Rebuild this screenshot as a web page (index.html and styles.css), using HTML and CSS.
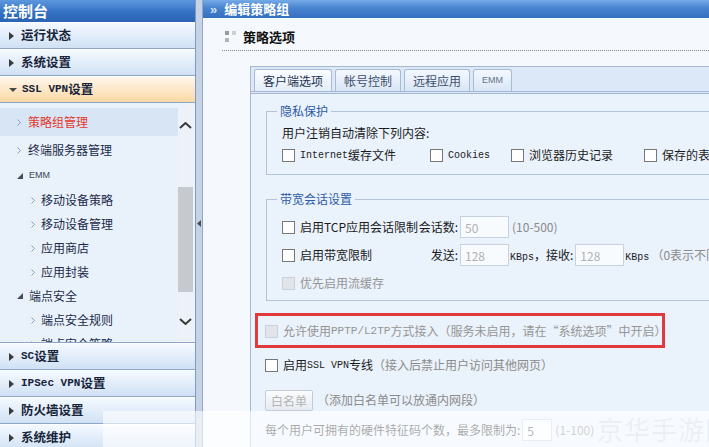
FILE: index.html
```html
<!DOCTYPE html>
<html lang="zh-CN">
<head>
    <meta charset="UTF-8">
    <title>控制台 - 编辑策略组</title>
    <link rel="stylesheet" href="styles.css">
</head>
<body>

<div class="app">

    <!-- 左侧导航 -->
    <aside class="sidebar">
        <div class="side-title">控制台</div>
        <div class="acc-head"><i class="tri-right"></i>运行状态</div>
        <div class="acc-head"><i class="tri-right"></i>系统设置</div>
        <div class="acc-head open"><i class="tri-down"></i><span class="en-b">SSL VPN</span>设置</div>

        <div class="acc-body">
            <ul class="tree">
                <li class="lv1 current"><svg class="chev" width="4" height="7" viewBox="0 0 4 7"><path d="M0.5 0.5L3.5 3.5L0.5 6.5" /></svg>策略组管理</li>
                <li class="lv1"><svg class="chev" width="4" height="7" viewBox="0 0 4 7"><path d="M0.5 0.5L3.5 3.5L0.5 6.5" /></svg>终端服务器管理</li>
                <li class="grp"><svg class="grp-tri" width="6" height="6" viewBox="0 0 6 6"><path d="M6 0V6H0Z" /></svg><span class="emm">EMM</span></li>
                <li class="lv2"><svg class="chev" width="4" height="7" viewBox="0 0 4 7"><path d="M0.5 0.5L3.5 3.5L0.5 6.5" /></svg>移动设备策略</li>
                <li class="lv2"><svg class="chev" width="4" height="7" viewBox="0 0 4 7"><path d="M0.5 0.5L3.5 3.5L0.5 6.5" /></svg>移动设备管理</li>
                <li class="lv2"><svg class="chev" width="4" height="7" viewBox="0 0 4 7"><path d="M0.5 0.5L3.5 3.5L0.5 6.5" /></svg>应用商店</li>
                <li class="lv2"><svg class="chev" width="4" height="7" viewBox="0 0 4 7"><path d="M0.5 0.5L3.5 3.5L0.5 6.5" /></svg>应用封装</li>
                <li class="grp"><svg class="grp-tri" width="6" height="6" viewBox="0 0 6 6"><path d="M6 0V6H0Z" /></svg>端点安全</li>
                <li class="lv2"><svg class="chev" width="4" height="7" viewBox="0 0 4 7"><path d="M0.5 0.5L3.5 3.5L0.5 6.5" /></svg>端点安全规则</li>
                <li class="lv2"><svg class="chev" width="4" height="7" viewBox="0 0 4 7"><path d="M0.5 0.5L3.5 3.5L0.5 6.5" /></svg>端点安全策略</li>
            </ul>
            <!-- 滚动条 -->
            <div class="vscroll">
                <div class="sb-btn up"><svg width="13" height="7" viewBox="0 0 13 7"><path d="M1 6L6.5 1L12 6" /></svg></div>
                <div class="sb-track"><div class="sb-thumb"></div></div>
                <div class="sb-btn down"><svg width="13" height="7" viewBox="0 0 13 7"><path d="M1 1L6.5 6L12 1" /></svg></div>
            </div>
        </div>

        <div class="acc-head"><i class="tri-right"></i><span class="en-b">SC</span>设置</div>
        <div class="acc-head"><i class="tri-right"></i><span class="en-b">IPSec VPN</span>设置</div>
        <div class="acc-head"><i class="tri-right"></i>防火墙设置</div>
        <div class="acc-head"><i class="tri-right"></i>系统维护</div>
    </aside>

    <div class="splitter">
        <svg width="4" height="7" viewBox="0 0 4 7"><path d="M4 0V7L0 3.5Z" /></svg>
    </div>

    <!-- 主内容 -->
    <main class="main">
        <div class="main-head"><span class="raquo">&raquo;</span>编辑策略组</div>

        <div class="section-title">
            <svg width="12" height="12" viewBox="0 0 12 12">
                <rect x="0" y="0" width="4" height="4" fill="#9a9a9a" />
                <rect x="7" y="0" width="4" height="4" fill="#cfcfcf" />
                <rect x="0" y="7" width="4" height="4" fill="#b3b3b3" />
            </svg>
            策略选项
        </div>

        <div class="tabs">
            <div class="tab-bar">
                <span class="tab active">客户端选项</span>
                <span class="tab">帐号控制</span>
                <span class="tab">远程应用</span>
                <span class="tab tab-en">EMM</span>
            </div>

            <div class="tab-panel">
                <fieldset class="group">
                    <legend>隐私保护</legend>
                    <div class="line">用户注销自动清除下列内容:</div>
                    <div class="clear-list">
                        <label><input type="checkbox"><span class="en">Internet</span>缓存文件</label>
                        <label><input type="checkbox"><span class="en">Cookies</span></label>
                        <label><input type="checkbox">浏览器历史记录</label>
                        <label><input type="checkbox">保存的表单密码</label>
                    </div>
                </fieldset>

                <fieldset class="group bandwidth">
                    <legend>带宽会话设置</legend>
                    <div class="bw-row">
                        <label class="bw-left"><input type="checkbox">启用TCP应用会话限制</label>
                        <span class="bw-key">会话数:</span>
                        <input class="num" type="text" value="50" readonly>
                        <span class="hint">(10-500)</span>
                    </div>
                    <div class="bw-row">
                        <label class="bw-left"><input type="checkbox">启用带宽限制</label>
                        <span class="bw-key">发送:</span>
                        <input class="num" type="text" value="128" readonly>
                        <span class="unit"><span class="en">KBps</span>，接收:</span>
                        <input class="num" type="text" value="128" readonly>
                        <span class="unit"><span class="en">KBps</span></span>
                        <span class="hint">（0表示不限制）</span>
                    </div>
                    <div class="bw-row">
                        <label class="off"><input type="checkbox" disabled>优先启用流缓存</label>
                    </div>
                </fieldset>

                <div class="mark">
                    <label class="off"><input type="checkbox" disabled>允许使用<span class="en wide">PPTP/L2TP</span>方式接入（服务未启用，请在“系统选项”中开启）</label>
                </div>

                <div class="row ssl">
                    <label><input type="checkbox">启用<span class="en">SSL VPN</span>专线</label>
                    <span class="hint">（接入后禁止用户访问其他网页）</span>
                </div>

                <div class="row white">
                    <button class="btn" disabled>白名单</button>
                    <span class="hint">（添加白名单可以放通内网段）</span>
                </div>

                <div class="row limit">
                    <span>每个用户可拥有的硬件特征码个数，最多限制为:</span>
                    <input class="num small" type="text" value="5" readonly>
                    <span class="hint">(1-100)</span>
                </div>
            </div>
        </div>
    </main>
</div>

<!-- 页脚水印 -->
<div class="watermark"><span>京华手游网</span></div>

</body>
</html>
```

FILE: styles.css
```css
* {
    box-sizing: border-box;
}

html, body {
    margin: 0;
    padding: 0;
}

body {
    font: 12px/1.5 "Noto Sans CJK SC", "Liberation Sans", sans-serif;
    color: #1b1b1b;
    background: #f5f9fd;
    overflow: hidden;
    position: relative;
    height: 447px;
}

.app {
    display: flex;
    height: 447px;
}

/* ===== 左侧导航 ===== */
.sidebar {
    width: 196px;
    flex: none;
    display: flex;
    flex-direction: column;
    background: #e8f0fa;
    border-right: 1px solid #7e9bbf;
    overflow: hidden;
}

.side-title {
    height: 22px;
    flex: none;
    padding-left: 3px;
    line-height: 22px;
    font-size: 15px;
    font-weight: bold;
    color: #fff;
    background: linear-gradient(#5c98de, #3571c3 55%, #2b64b4);
}

.acc-head {
    height: 27px;
    flex: none;
    display: flex;
    align-items: center;
    padding-left: 9px;
    font-size: 12.5px;
    font-weight: bold;
    color: #17243a;
    white-space: nowrap;
    background: linear-gradient(#f4f9ff, #d0e1f4);
    border-top: 1px solid #fff;
    border-bottom: 1px solid #8ca7c8;
}

.acc-head.open {
    background: linear-gradient(#fff7ec, #fbd8a4);
}

.en-b {
    font-family: "Liberation Mono", monospace;
    font-size: 11px;
    font-weight: bold;
}

.tri-right {
    width: 0;
    height: 0;
    margin-right: 7px;
    border-left: 5px solid #3b3b3b;
    border-top: 4px solid transparent;
    border-bottom: 4px solid transparent;
}

.tri-down {
    width: 0;
    height: 0;
    margin-right: 5px;
    border-top: 4px solid #4a4a4a;
    border-left: 4px solid transparent;
    border-right: 4px solid transparent;
}

.acc-body {
    height: 240px;
    flex: none;
    display: flex;
    overflow: hidden;
    background: #e9f1fb;
    border-bottom: 1px solid #8ca7c8;
}

.tree {
    flex: 1;
    list-style: none;
    margin: 0;
    padding: 5px 0 0;
    overflow: hidden;
}

.tree li {
    display: flex;
    align-items: center;
    white-space: nowrap;
    color: #1b2a48;
}

.tree .chev {
    fill: none;
    stroke: #8f9db1;
    margin-right: 7px;
}

.lv1 {
    height: 28px;
    padding-left: 17px;
}

.lv1.current {
    background: #d8e5f5;
    color: #e4372b;
}

.grp {
    height: 24px;
    padding-left: 17px;
}

.grp-tri {
    fill: #454b55;
    margin-right: 6px;
}

.emm {
    font-family: "Liberation Sans", sans-serif;
    font-size: 9px;
    color: #3c4452;
}

.lv2 {
    height: 24px;
    padding-left: 31px;
}

.lv2 .chev {
    margin-right: 6px;
}

/* 滚动条 */
.vscroll {
    width: 17px;
    flex: none;
    display: flex;
    flex-direction: column;
    background: #edf2f8;
}

.sb-btn {
    display: flex;
    align-items: center;
    justify-content: center;
    padding-right: 2px;
}

.sb-btn svg {
    fill: none;
    stroke: #3a3a3a;
    stroke-width: 2;
}

.sb-btn.up {
    height: 44px;
}

.sb-btn.down {
    height: 42px;
}

.sb-track {
    flex: 1;
    padding-top: 40px;
}

.sb-thumb {
    width: 15px;
    height: 105px;
    background: #c6c9cd;
}

/* 分隔条 */
.splitter {
    width: 7px;
    flex: none;
    display: flex;
    align-items: center;
    justify-content: center;
    background: #c5d3e4;
    border-right: 1px solid #8fa8c6;
}

.splitter svg {
    fill: #4d4d4d;
}

/* ===== 主内容 ===== */
.main {
    flex: 1;
    min-width: 0;
    overflow: hidden;
    background: #f5f9fd;
}

.main-head {
    height: 18px;
    padding-left: 7px;
    line-height: 18px;
    font-size: 13px;
    font-weight: bold;
    color: #fff;
    white-space: nowrap;
    background: linear-gradient(#74aae6, #4783cf 45%, #3470c0);
}

.raquo {
    font-family: "Liberation Sans", sans-serif;
    font-size: 13px;
    color: #d3e3f7;
    margin-right: 7px;
}

.section-title {
    display: flex;
    align-items: center;
    height: 23px;
    margin: 10px 0 0 19px;
    padding: 0 0 4px 3px;
    font-size: 13px;
    font-weight: bold;
    color: #111;
    border-bottom: 1px dotted #8a8a8a;
}

.section-title svg {
    margin-right: 6px;
}

/* 标签页 */
.tabs {
    width: 560px;
    margin: 15px 0 0 47px;
    border-left: 1px solid #a7b9d1;
    background: #eaf2fb;
}

.tab-bar {
    display: flex;
    gap: 3px;
    padding: 2px 0 0 3px;
    background: #dce8f7;
    border-top: 1px solid #a7b9d1;
    border-bottom: 3px double #a3b7d1;
}

.tab {
    height: 22px;
    padding: 0 8px;
    line-height: 21px;
    color: #3e4f6d;
    white-space: nowrap;
    background: linear-gradient(#f3f8fe, #d9e6f6);
    border: 1px solid #a8bbd3;
    border-bottom: none;
    border-radius: 3px 3px 0 0;
}

.tab.active {
    color: #22324d;
    background: linear-gradient(#fbfdff, #e3edf9);
}

.tab-en {
    font-family: "Liberation Sans", sans-serif;
    font-size: 9px;
    color: #66738a;
}

.tab-panel {
    padding: 9px 0 40px 14px;
    white-space: nowrap;
}

input[type="checkbox"] {
    appearance: none;
    width: 13px;
    height: 13px;
    margin: 0 5px 0 0;
    flex: none;
    background: #fff;
    border: 1px solid #777;
}

input[type="checkbox"]:disabled {
    background: #e1e5ea;
    border-color: #ccd2d9;
}

label {
    display: inline-flex;
    align-items: center;
}

label.off {
    color: #959595;
}

.en {
    font-family: "Liberation Mono", monospace;
    font-size: 10px;
}

.en.wide {
    font-size: 11px;
}

.hint {
    color: #8b8b8b;
}

/* 分组框 */
fieldset.group {
    margin: 0 0 0 1px;
    padding: 0 0 10px 15px;
    border: 1px solid #b4c3d6;
    min-width: 0;
}

fieldset.group legend {
    margin-left: -5px;
    padding: 0 3px;
    line-height: 16px;
    color: #2e5ba6;
}

.line {
    margin-top: 5px;
    line-height: 18px;
}

.clear-list {
    display: grid;
    grid-template-columns: 148px 81px 133px auto;
    margin-top: 4px;
    height: 18px;
    align-items: center;
}

.bandwidth {
    margin-top: 16px !important;
    padding-bottom: 5px !important;
}

.bw-row {
    display: flex;
    align-items: center;
    height: 24px;
    margin-top: 4px;
}

.bw-row:first-of-type {
    margin-top: 8px;
}

.bw-left {
    width: 132px;
}

.bw-key {
    width: 46px;
    padding-right: 2px;
    text-align: right;
}

.num {
    width: 49px;
    height: 22px;
    padding: 0 0 0 4px;
    font: 12px "Noto Sans CJK SC", "Liberation Sans", sans-serif;
    color: #b2b2b2;
    background: #f8fbfe;
    border: 1px solid #c7d2de;
    outline: none;
}

.num + .hint {
    margin-left: 3px;
}

.unit {
    margin: 0 2px 0 1px;
}

/* 标注框 */
.mark {
    display: flex;
    align-items: center;
    width: 410px;
    height: 35px;
    margin: 12px 0 0 -10px;
    padding: 1px 0 0 7px;
    border: 3px solid #e03a3d;
}

.row {
    display: flex;
    align-items: center;
}

.ssl {
    height: 20px;
    margin-top: 7px;
}

.white {
    height: 22px;
    margin-top: 14px;
}

.btn {
    height: 21px;
    padding: 0 5px;
    margin-right: 4px;
    font: 12px "Noto Sans CJK SC", sans-serif;
    color: #b4b4b4;
    background: linear-gradient(#fbfcfe, #e6ebf1);
    border: 1px solid #c5ccd6;
    border-radius: 2px;
}

.limit {
    height: 22px;
    margin-top: 8px;
}

.num.small {
    width: 30px;
    margin-left: 2px;
    color: #444;
}

/* 页脚水印 */
.watermark {
    position: absolute;
    left: 103px;
    top: 411px;
    width: 606px;
    height: 36px;
    padding-left: 494px;
    background: rgba(255, 255, 255, 0.62);
    overflow: hidden;
    white-space: nowrap;
}

.watermark span {
    font-size: 26px;
    line-height: 36px;
    letter-spacing: 1px;
    color: rgba(175, 185, 198, 0.16);
}
```
